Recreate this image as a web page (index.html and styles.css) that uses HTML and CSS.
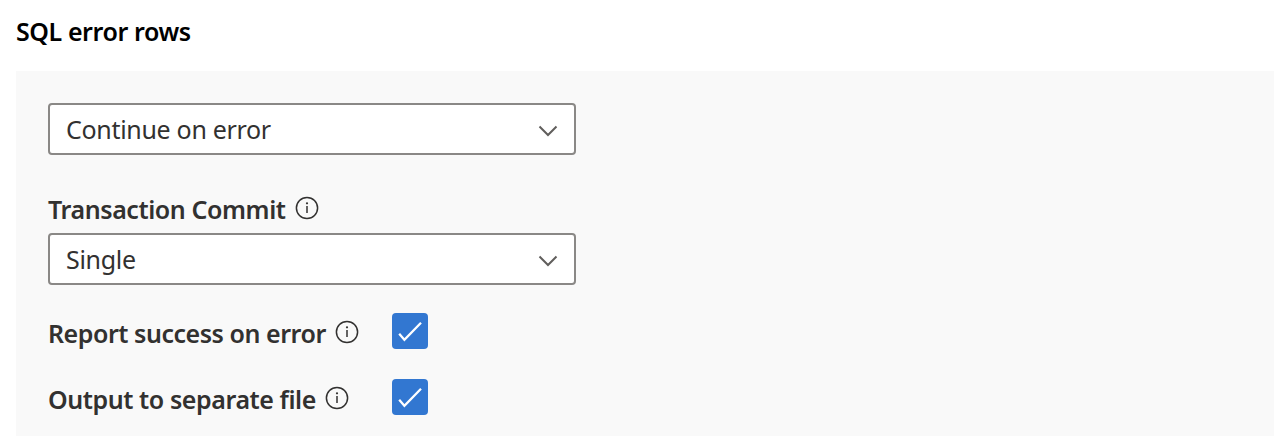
FILE: index.html
```html
<!DOCTYPE html>
<html lang="en">
<head>
<meta charset="utf-8">
<title>SQL error rows</title>
<link rel="stylesheet" href="styles.css">
</head>
<body>
<h1 class="title">SQL error rows</h1>
<main class="panel">
  <div class="select"><span>Continue on error</span><svg class="chevron" viewBox="0 0 20 12"><path d="M1.500 1.500 10 10l8.500-8.500"/></svg></div>
  <div class="label-row"><span class="label">Transaction Commit</span><svg class="info" viewBox="0 0 24 24"><circle cx="12" cy="12" r="10.600"/><path d="M12 10v7"/><circle class="dot" cx="12" cy="7.300" r="1.100"/></svg></div>
  <div class="select"><span>Single</span><svg class="chevron" viewBox="0 0 20 12"><path d="M1.500 1.500 10 10l8.500-8.500"/></svg></div>
  <div class="check-row first"><div class="check-label"><span class="label">Report success on error</span><svg class="info" viewBox="0 0 24 24"><circle cx="12" cy="12" r="10.600"/><path d="M12 10v7"/><circle class="dot" cx="12" cy="7.300" r="1.100"/></svg></div><span class="checkbox"><svg viewBox="0 0 36 36"><path d="m7.200 20.800 5.200 5.900L29 9.700"/></svg></span></div>
  <div class="check-row"><div class="check-label"><span class="label">Output to separate file</span><svg class="info" viewBox="0 0 24 24"><circle cx="12" cy="12" r="10.600"/><path d="M12 10v7"/><circle class="dot" cx="12" cy="7.300" r="1.100"/></svg></div><span class="checkbox"><svg viewBox="0 0 36 36"><path d="m7.200 20.800 5.200 5.900L29 9.700"/></svg></span></div>
</main>
</body>
</html>
```
FILE: styles.css
```css
* { box-sizing: border-box; }
body { margin: 0; background: #fff; font-family: "Noto Sans", "Open Sans", sans-serif; color: #323130; overflow: hidden; }
.title { margin: 0; height: 71px; padding: 13px 16px 0; font-size: 25px; line-height: 36px; font-weight: 600; letter-spacing: -0.42px; color: #000; }
.panel { margin-left: 16px; height: 365px; padding: 32px; background: #f9f9f9; }
.select { display: flex; align-items: center; justify-content: space-between; width: 528px; height: 52px; padding: 0 16px; border: 2px solid #8a8886; border-radius: 4px; background: #fff; font-size: 25px; line-height: 36px; letter-spacing: -0.31px; }
.chevron { width: 20px; height: 12px; margin-top: 4px; fill: none; stroke: #605e5c; stroke-width: 2; }
.label-row { display: flex; align-items: center; gap: 9px; height: 36px; margin: 36px 0 6px; }
.label { font-size: 25px; line-height: 36px; font-weight: 600; letter-spacing: -0.42px; white-space: nowrap; }
.first .label { letter-spacing: -0.46px; }
.info { width: 24px; height: 24px; margin-bottom: 2px; flex: none; fill: none; stroke: #323130; stroke-width: 1.5; }
.dot { fill: #323130; stroke: none; }
.check-row { display: flex; align-items: flex-start; height: 66px; }
.first { margin-top: 28px; }
.check-label { display: flex; align-items: center; gap: 9px; width: 344px; height: 40px; }
.checkbox { width: 36px; height: 36px; border-radius: 4px; background: #3277d1; }
.checkbox svg { display: block; fill: none; stroke: #fff; stroke-width: 2.3; }
```
